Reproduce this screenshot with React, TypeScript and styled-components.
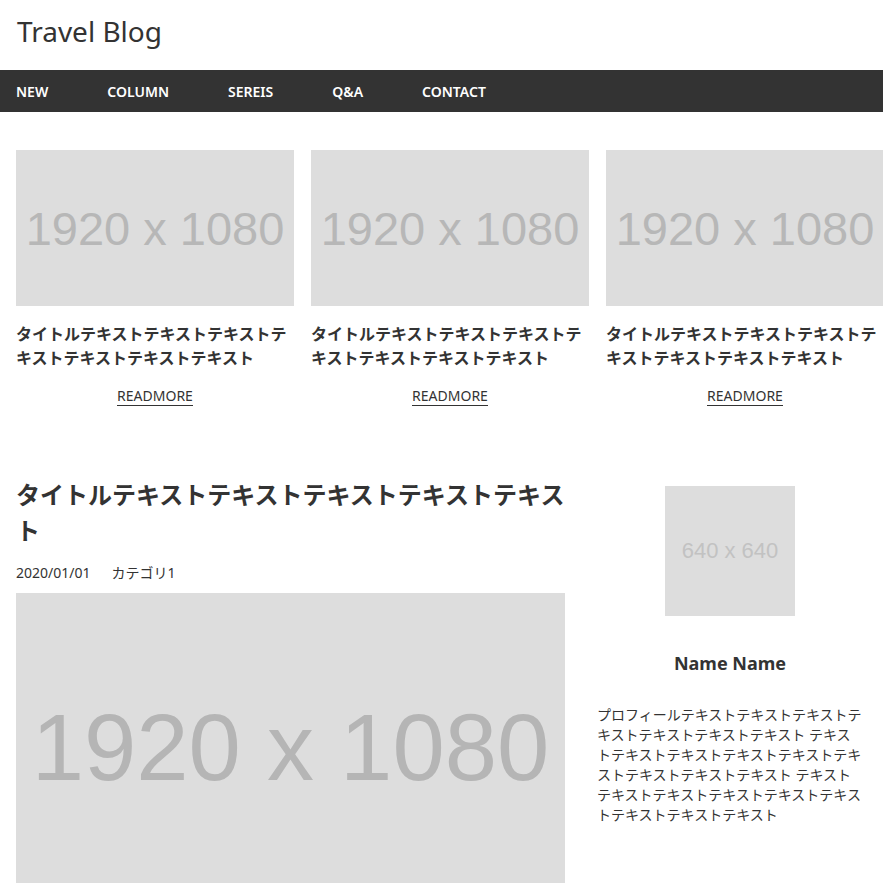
import { FunctionComponent } from "react";
import styled, { createGlobalStyle } from "styled-components";

const GlobalStyle = createGlobalStyle`
  html, body {
    margin: 0;
    padding: 0;
    background: #fff;
    overflow-x: hidden;
  }
  body {
    font-family: "Noto Sans", "Noto Sans CJK JP", sans-serif;
    color: #333;
  }
  * {
    box-sizing: border-box;
  }
`;

const Header = styled.header`
  height: 70px;
  display: flex;
  align-items: center;
  padding: 0 17px;
`;

const Logo = styled.h1`
  margin: 0;
  font-size: 28px;
  font-weight: 400;
  line-height: 1;
  color: #333;
  padding-bottom: 8px;
`;

const Nav = styled.nav`
  height: 42px;
  background: #333;
  display: flex;
  align-items: center;
  gap: 59px;
  padding: 0 16px;
`;

const NavItem = styled.a`
  color: #fff;
  font-size: 14px;
  font-weight: 600;
  text-decoration: none;
`;

const Main = styled.main`
  padding: 38px 16px 0;
`;

const CardGrid = styled.section`
  display: grid;
  grid-template-columns: repeat(3, 278px);
  gap: 17px;
`;

const Card = styled.article`
  display: flex;
  flex-direction: column;
  align-items: stretch;
`;

const Placeholder = styled.div<{ $size: number; $ratio: string; $tone: string }>`
  width: 100%;
  aspect-ratio: ${(p) => p.$ratio};
  background: #dddddd;
  display: flex;
  align-items: center;
  justify-content: center;
  font-family: "Liberation Sans", Arial, sans-serif;
  font-size: ${(p) => p.$size}px;
  color: ${(p) => p.$tone};
  white-space: nowrap;
  overflow: hidden;
`;

const CardTitle = styled.h2`
  margin: 16px 0 0;
  font-size: 16px;
  font-weight: 700;
  line-height: 24px;
  color: #333;
`;

const ReadMore = styled.a`
  align-self: center;
  margin-top: 17px;
  font-size: 14px;
  line-height: 18px;
  color: #333;
  text-decoration: none;
  border-bottom: 1px solid #333;
`;

const Body = styled.section`
  display: grid;
  grid-template-columns: 549px 266px;
  gap: 32px;
  margin-top: 71px;
`;

const Post = styled.article`
  display: flex;
  flex-direction: column;
`;

const PostTitle = styled.h1`
  margin: 0;
  font-size: 24px;
  font-weight: 700;
  line-height: 36px;
  color: #333;
`;

const Meta = styled.div`
  display: flex;
  gap: 21px;
  margin: 14px 0 10px;
  font-size: 14px;
  line-height: 20px;
`;

const Sidebar = styled.aside`
  display: flex;
  flex-direction: column;
  align-items: center;
  padding-top: 9px;
`;

const Avatar = styled.div`
  width: 130px;
`;

const ProfileName = styled.h3`
  margin: 34px 0 0;
  font-size: 18px;
  font-weight: 700;
  line-height: 27px;
`;

const ProfileText = styled.p`
  margin: 28px 0 0;
  font-size: 14px;
  line-height: 20px;
  word-break: break-all;
`;

const posts = [1, 2, 3];
const cardTitle = "タイトルテキストテキストテキストテキストテキストテキストテキスト";
const profile =
  "プロフィール" +
  "テキスト".repeat(7) +
  " " +
  "テキスト".repeat(9) +
  " " +
  "テキスト".repeat(9);

const App: FunctionComponent = () => {
  return (
    <>
      <GlobalStyle />
      <Header>
        <Logo>Travel Blog</Logo>
      </Header>
      <Nav>
        <NavItem href="#">NEW</NavItem>
        <NavItem href="#">COLUMN</NavItem>
        <NavItem href="#">SEREIS</NavItem>
        <NavItem href="#">Q&amp;A</NavItem>
        <NavItem href="#">CONTACT</NavItem>
      </Nav>
      <Main>
        <CardGrid>
          {posts.map((id) => (
            <Card key={id}>
              <Placeholder $size={47} $ratio="16 / 9" $tone="#b7b7b7">
                1920 x 1080
              </Placeholder>
              <CardTitle>{cardTitle}</CardTitle>
              <ReadMore href="#">READMORE</ReadMore>
            </Card>
          ))}
        </CardGrid>
        <Body>
          <Post>
            <PostTitle>タイトルテキストテキストテキストテキストテキスト</PostTitle>
            <Meta>
              <span>2020/01/01</span>
              <span>カテゴリ1</span>
            </Meta>
            <Placeholder $size={94} $ratio="16 / 9" $tone="#b5b5b5">
              1920 x 1080
            </Placeholder>
          </Post>
          <Sidebar>
            <Avatar>
              <Placeholder $size={22} $ratio="1 / 1" $tone="#c2c2c2">
                640 x 640
              </Placeholder>
            </Avatar>
            <ProfileName>Name Name</ProfileName>
            <ProfileText>{profile}</ProfileText>
          </Sidebar>
        </Body>
      </Main>
    </>
  );
};

export default App;
